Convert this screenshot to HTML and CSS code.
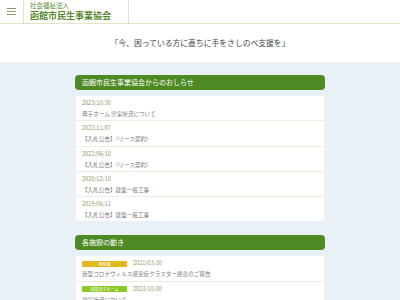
FILE: index.html
```html
<!DOCTYPE html>
<html lang="ja">
<head>
    <meta charset="UTF-8">
    <meta name="viewport" content="width=device-width, initial-scale=1.0">
    <title>社会福祉法人 函館市民生事業協会</title>
    <link rel="stylesheet" href="styles.css">
</head>
<body>
    <header class="site-header">
        <div class="menu-btn">
            <svg width="9" height="7" viewBox="0 0 9 7">
                <rect x="0" y="0" width="9" height="1" fill="#8a9a6a"/>
                <rect x="0" y="3" width="9" height="1" fill="#8a9a6a"/>
                <rect x="0" y="6" width="9" height="1" fill="#8a9a6a"/>
            </svg>
        </div>
        <div class="logo">
            <span class="logo-sub">社会福祉法人</span>
            <span class="logo-main">函館市民生事業協会</span>
        </div>
    </header>

    <p class="tagline">「今、困っている方に直ちに手をさしのべ支援を」</p>

    <main class="content">
        <section class="section">
            <h2 class="section-title">函館市民生事業協会からのおしらせ</h2>
            <ul class="news-list">
                <li class="news-item">
                    <span class="news-date">2023/10/30</span>
                    <span class="news-title">母子ホーム 空室状況について</span>
                </li>
                <li class="news-item">
                    <span class="news-date">2022/11/07</span>
                    <span class="news-title">【入札公告】（リース契約）</span>
                </li>
                <li class="news-item">
                    <span class="news-date">2022/06/10</span>
                    <span class="news-title">【入札公告】（リース契約）</span>
                </li>
                <li class="news-item">
                    <span class="news-date">2020/12/10</span>
                    <span class="news-title">【入札公告】建築一般工事</span>
                </li>
                <li class="news-item">
                    <span class="news-date">2019/06/11</span>
                    <span class="news-title">【入札公告】建築一般工事</span>
                </li>
            </ul>
        </section>

        <section class="section">
            <h2 class="section-title">各施設の動き</h2>
            <ul class="news-list">
                <li class="news-item">
                    <div class="news-meta">
                        <span class="badge badge-yellow">明和園</span>
                        <span class="news-date">2021/03/30</span>
                    </div>
                    <span class="news-title">新型コロナウィルス感染症クラスター終息のご報告</span>
                </li>
                <li class="news-item">
                    <div class="news-meta">
                        <span class="badge badge-green">松陰母子ホーム</span>
                        <span class="news-date">2023/10/30</span>
                    </div>
                    <span class="news-title">空室状況について</span>
                </li>
            </ul>
        </section>
    </main>
</body>
</html>
```

FILE: styles.css
```css
body {
    margin: 0;
    font-family: "Noto Sans CJK JP", "Noto Sans", sans-serif;
    background-color: #fff;
    color: #555;
}
.site-header {
    display: flex;
    height: 23px;
    border-bottom: 1px solid #e6e3c4;
    background-color: #fff;
}
.menu-btn {
    width: 23px;
    display: flex;
    align-items: center;
    justify-content: center;
    border-right: 1px solid #e6e3c4;
}
.logo {
    width: 98px;
    padding-left: 6px;
    display: flex;
    flex-direction: column;
    justify-content: center;
    border-right: 1px solid #e6e3c4;
    color: #5a8a30;
}
.logo-sub {
    font-size: 6.5px;
    line-height: 9px;
}
.logo-main {
    font-size: 9px;
    line-height: 12px;
    font-weight: bold;
}
.tagline {
    margin: 0;
    height: 38px;
    line-height: 38px;
    text-align: center;
    font-size: 7.8px;
    color: #444;
}
.content {
    background-color: #e9f0f6;
    padding: 13px 75px 20px;
    min-height: 300px;
}
.section {
    margin-bottom: 14px;
}
.section-title {
    margin: 0 0 6px;
    height: 15px;
    line-height: 15px;
    padding: 0 7px;
    font-size: 7px;
    font-weight: normal;
    color: #fff;
    background-color: #4e8a23;
    border-radius: 4px;
}
.news-list {
    list-style: none;
    margin: 0 1px;
    padding: 0;
    background-color: #fff;
    border-radius: 3px;
}
.news-item {
    display: flex;
    flex-direction: column;
    padding: 3px 6px 0.3px;
    border-bottom: 1px solid #eeeedc;
}
.news-item:last-child {
    border-bottom: none;
}
.news-date {
    font-size: 5.5px;
    line-height: 9px;
    color: #8a9c6a;
}
.news-title {
    font-size: 5.6px;
    line-height: 12px;
    color: #7a7a7a;
}
.news-meta {
    display: flex;
    align-items: center;
    gap: 6px;
    height: 9px;
}
.badge {
    width: 45px;
    height: 6px;
    line-height: 6px;
    text-align: center;
    font-size: 4px;
    color: #fff;
    border-radius: 1px;
}
.badge-yellow {
    background-color: #e2b822;
}
.badge-green {
    background-color: #8cc824;
}
```
